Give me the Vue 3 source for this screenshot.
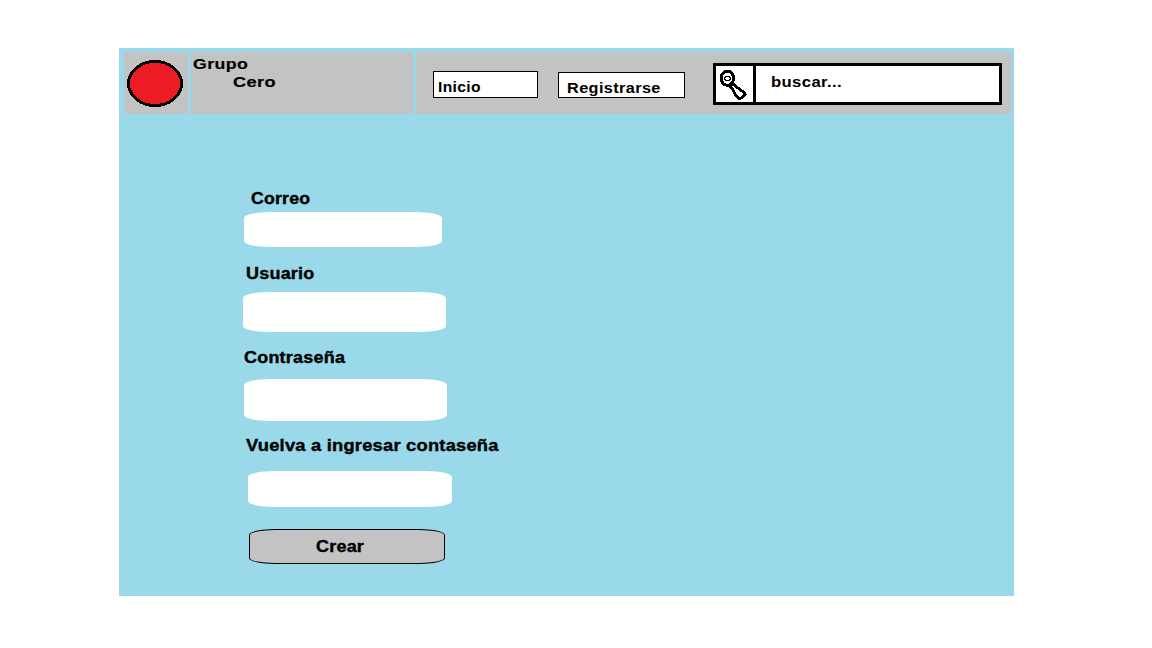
<script setup>
const fields = [
  { id: 'correo', label: 'Correo', type: 'email' },
  { id: 'usuario', label: 'Usuario', type: 'text' },
  { id: 'clave', label: 'Contraseña', type: 'password' },
  { id: 'repetir', label: 'Vuelva a ingresar contaseña', type: 'password' },
]
</script>

<template>
  <main class="window">
    <header class="header">
      <div class="cell logo">
        <svg width="56" height="47" viewBox="0 0 56 47">
          <ellipse cx="28" cy="23.5" rx="26.5" ry="22" fill="#ed1c24" stroke="#000" stroke-width="3" shape-rendering="crispEdges" />
        </svg>
      </div>
      <div class="cell brand">
        <span class="text grupo">Grupo</span>
        <span class="text cero">Cero</span>
      </div>
      <nav class="cell nav">
        <a class="link inicio"><span class="text">Inicio</span></a>
        <a class="link registro"><span class="text">Registrarse</span></a>
        <div class="search">
          <div class="glass">
            <svg width="37" height="36" viewBox="716 66 37 36" fill="none" stroke="#000" shape-rendering="crispEdges">
              <path d="M729.5 86 L732.5 89 L735.5 95 L739 98.6 L741.5 98 L745 94.3 L744 92.3 L738 88 L733 83.5" fill="#fff" stroke-width="2.8" />
              <path d="M730 86 L733.5 84.5" stroke-width="2.4" />
              <ellipse cx="727.3" cy="78.2" rx="6.2" ry="7.2" fill="#fff" stroke-width="3" />
              <path d="M724.5 77.5 H725.5 V76.5 H729.5 V77.5 H730.5 V79.5 H729.5 V80.5 H725.5 V79.5 H724.5 Z" stroke-width="1" />
            </svg>
          </div>
          <span class="text buscar">buscar...</span>
        </div>
      </nav>
    </header>

    <form class="form" @submit.prevent>
      <div v-for="f in fields" :key="f.id" class="field" :class="f.id">
        <label class="text" :for="f.id">{{ f.label }}</label>
        <input :id="f.id" :type="f.type" />
      </div>
      <button class="create"><span class="text">Crear</span></button>
    </form>
  </main>
</template>

<style>
body {
  background: #fff;
}
</style>

<style scoped>
.window {
  box-sizing: border-box;
  width: 895px;
  height: 548px;
  margin: 48px 0 0 119px;
  padding: 4px 3px 0 5px;
  background: #99d9ea;
  font-family: "Liberation Sans", Arial, sans-serif;
  font-weight: bold;
  color: #000;
  display: flow-root;
}
.header {
  display: grid;
  grid-template-columns: 64px 222px 595px;
  column-gap: 3px;
  height: 62px;
}
.cell {
  background: #c3c3c3;
}
.text {
  display: block;
  width: max-content;
  white-space: nowrap;
  font-size: 15px;
  line-height: 18px;
  transform-origin: 0 0;
  transform: scaleX(1.11);
  letter-spacing: 0.35px;
}
.logo {
  padding: 8px 0 0 3px;
}
.logo svg {
  display: block;
}
.brand {
  padding: 3px 0 0 2px;
}
.brand .text {
  transform: scaleX(1.18);
  -webkit-text-stroke: 0.2px #000;
}
.brand .cero {
  margin-left: 40px;
  transform: scaleX(1.21);
}
.nav {
  display: flex;
  align-items: flex-start;
  padding-left: 17px;
}
.link {
  box-sizing: border-box;
  border: 1px solid #000;
  background: #fff;
}
.inicio {
  width: 105px;
  height: 27px;
  margin-top: 19px;
  padding: 6px 0 0 4px;
}
.inicio .text {
  transform: scaleX(1.04);
}
.registro {
  width: 127px;
  height: 26px;
  margin: 20px 0 0 20px;
  padding: 6px 0 0 8px;
}
.registro .text {
  transform: scaleX(1.085);
}
.search {
  box-sizing: border-box;
  display: flex;
  width: 289px;
  height: 42px;
  margin: 11px 0 0 28px;
  border: 3px solid #000;
  background: #fff;
}
.glass {
  width: 37px;
  border-right: 3px solid #000;
}
.glass svg {
  display: block;
}
.buscar {
  margin: 7px 0 0 15px;
}
.form {
  padding: 75px 0 0 119px;
}
.form .text {
  font-size: 16.5px;
  letter-spacing: 0.2px;
  transform: scaleX(1.09);
  -webkit-text-stroke: 0.4px #000;
}
.field input {
  box-sizing: border-box;
  display: block;
  border: 0;
  outline: 0;
  padding: 0 12px;
  background: #fff;
  border-radius: 26px / 6px;
}
.correo {
  padding-left: 1px;
}
.form .correo .text {
  margin-left: 7px;
  transform: scaleX(1.07);
}
.correo input {
  width: 198px;
  height: 35px;
  margin-top: 5px;
}
.usuario {
  margin-top: 17px;
}
.usuario .text {
  margin-left: 3px;
}
.usuario input {
  width: 203px;
  height: 40px;
  margin-top: 10px;
}
.clave {
  margin-top: 16px;
  padding-left: 1px;
}
.clave input {
  width: 203px;
  height: 42px;
  margin-top: 13px;
}
.repetir {
  margin-top: 15px;
  padding-left: 3px;
}
.form .repetir .text {
  transform: scaleX(1.11);
}
.repetir input {
  width: 204px;
  height: 36px;
  margin: 17px 0 0 2px;
}
.create {
  box-sizing: border-box;
  display: block;
  width: 196px;
  height: 35px;
  margin: 22px 0 0 6px;
  padding: 0 0 1px 66px;
  border: 1px solid #000;
  border-radius: 26px / 6px;
  background: #c3c3c3;
  font: inherit;
  color: inherit;
  text-align: left;
}
</style>
